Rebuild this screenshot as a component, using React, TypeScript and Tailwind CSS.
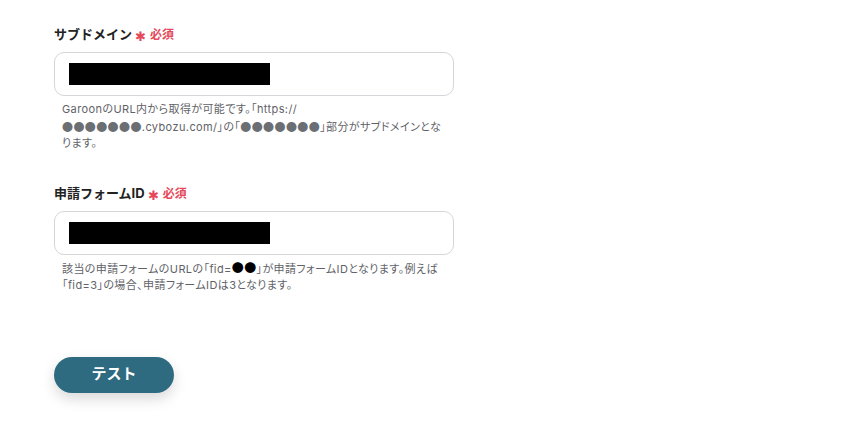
import React from 'react';

const font = { fontFamily: 'Inter, "Noto Sans CJK JP", sans-serif' };

const Field: React.FC<{ label: string; help: React.ReactNode }> = ({ label, help }) => (
  <div className="flex flex-col">
    <div className="flex items-center h-[18px]">
      <span className="text-[13px] font-bold text-[#222]">{label}</span>
      <span className="ml-[3px] text-[#e4485a] text-[13px] leading-none mt-[3px]">✱</span>
      <span className="ml-[4px] text-[#e4485a] text-[12px] font-bold">必須</span>
    </div>
    <div className="mt-[8px] w-[400px] h-[44px] rounded-[10px] border border-[#d4d6da] bg-white flex items-center px-[14px]">
      <div className="w-[201px] h-[22px] bg-black" />
    </div>
    <div
      className="mt-[5px] pl-[8px] w-[400px] text-[11px] leading-[16.5px] text-[#5f6368] tracking-[0.4px] whitespace-nowrap"
      style={{ fontFeatureSettings: '"palt"' }}
    >
      {help}
    </div>
  </div>
);

const Dots: React.FC<{ n: number; dark?: boolean }> = ({ n, dark }) => (
  <span className={`font-['Noto_Sans_CJK_JP'] ${dark ? 'text-black text-[12px]' : 'text-[#6b6e73]'}`}>
    {'●'.repeat(n)}
  </span>
);

export default function App() {
  return (
    <div className="w-[842px] h-[442px] bg-white pl-[54px] pt-[26px]" style={font}>
      <Field
        label="サブドメイン"
        help={
          <>
            GaroonのURL内から取得が可能です。「https://
            <br />
            <Dots n={7} />.cybozu.com/」の「<Dots n={7} />」部分がサブドメインとな
            <br />
            ります。
          </>
        }
      />
      <div className="mt-[33px]">
        <Field
          label="申請フォームID"
          help={
            <>
              該当の申請フォームのURLの「fid=<Dots n={2} dark />」が申請フォームIDとなります。例えば
              <br />
              「fid=3」の場合、申請フォームIDは3となります。
            </>
          }
        />
      </div>
      <button className="mt-[63px] w-[120px] h-[36px] rounded-full bg-[#2e6a80] text-white text-[15px] font-bold shadow-[0_6px_14px_rgba(0,0,0,0.15)]">
        テスト
      </button>
    </div>
  );
}
